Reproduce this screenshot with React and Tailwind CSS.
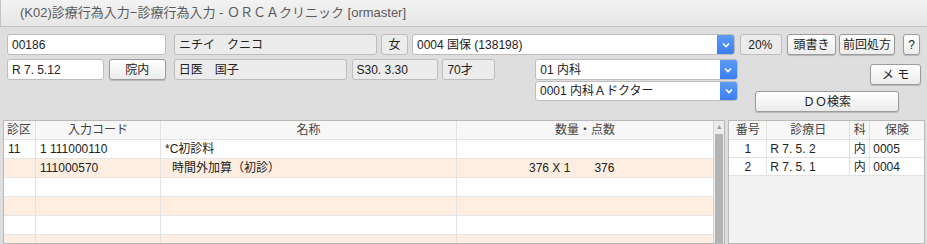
import React from 'react';

const font = { fontFamily: '"Liberation Sans", "Noto Sans CJK JP", sans-serif' };

const Box = ({ className, children }) => (
  <div className={`h-full flex items-center px-[4px] border border-[#bdbdbd] rounded-[3px] text-[12px] text-[#222] whitespace-nowrap overflow-hidden ${className}`}>
    {children}
  </div>
);

const Btn = ({ className, children }) => (
  <div className={`h-full flex items-center justify-center border border-[#9c9c9c] rounded-[3px] bg-gradient-to-b from-white to-[#ececec] shadow-[0_1px_1px_rgba(0,0,0,0.18)] text-[12px] text-[#222] whitespace-nowrap ${className}`}>
    {children}
  </div>
);

const Chevron = () => (
  <svg width="8" height="6" viewBox="0 0 8 6">
    <path d="M1 1.5 L4 4.5 L7 1.5" fill="none" stroke="white" strokeWidth="1.6" />
  </svg>
);

const Select = ({ className, children }) => (
  <div className={`h-full flex border border-[#bdbdbd] rounded-[3px] bg-white overflow-hidden ${className}`}>
    <div className="flex-1 flex items-center px-[4px] text-[12px] text-[#222] whitespace-nowrap">{children}</div>
    <div className="w-[17px] flex items-center justify-center bg-gradient-to-b from-[#5b9bf8] to-[#3a7ef0]">
      <Chevron />
    </div>
  </div>
);

const leftRows = [
  { bg: 'bg-white', a: '11', b: '1 111000110', c: '*C初診料', d: null },
  { bg: 'bg-[#fdeee1]', a: '', b: '111000570', c: '時間外加算（初診）', indent: true, d: ['376 X 1', '376'] },
  { bg: 'bg-white' },
  { bg: 'bg-[#fdeee1]' },
  { bg: 'bg-white' },
  { bg: 'bg-[#fdeee1]' },
];

const rightRows = [
  { no: '1', date: 'R 7. 5. 2', ka: '内', ins: '0005' },
  { no: '2', date: 'R 7. 5. 1', ka: '内', ins: '0004' },
];

export default function App() {
  return (
    <div className="w-[927px] h-[244px] overflow-hidden bg-[#dedede] flex flex-col" style={font}>
      {/* title bar */}
      <div className="h-[27px] shrink-0 flex items-center pl-[19px] border-b border-l border-[#c4c4c4] bg-gradient-to-b from-[#f3f3f3] to-[#e6e6e6] text-[13px] text-[#5a5a5a]">
        (K02)診療行為入力−診療行為入力 - ＯＲＣＡクリニック [ormaster]
      </div>

      {/* top form */}
      <div className="flex pt-[7px] pl-[7px] h-[93px] shrink-0">
        <div className="w-[731px] flex flex-col">
          <div className="flex h-[21px]">
            <Box className="w-[159px] bg-white">00186</Box>
            <Box className="w-[203px] ml-[8px] bg-[#ececec]">ニチイ　クニコ</Box>
            <Box className="w-[27px] ml-[4px] bg-[#ececec] justify-center">女</Box>
            <Select className="w-[323px] ml-[4px]">0004 国保 (138198)</Select>
          </div>
          <div className="flex h-[21px] mt-[4px]">
            <Box className="w-[97px] bg-white">R 7. 5.12</Box>
            <Btn className="w-[57px] ml-[5px]">院内</Btn>
            <Box className="w-[173px] ml-[8px] bg-[#ececec]">日医　国子</Box>
            <Box className="w-[87px] ml-[5px] bg-[#ececec]">S30. 3.30</Box>
            <Box className="w-[53px] ml-[4px] bg-[#ececec]">70才</Box>
            <Select className="w-[203px] ml-[40px]">01 内科</Select>
          </div>
          <div className="flex h-[20px] mt-[1px] pl-[528px]">
            <Select className="w-[203px]">0001 内科Ａドクター</Select>
          </div>
        </div>
        <div className="flex-1 flex flex-col">
          <div className="flex h-[21px] pl-[2px]">
            <Box className="w-[42px] bg-[#ececec]">&nbsp;20%</Box>
            <Btn className="w-[49px] ml-[5px]">頭書き</Btn>
            <Btn className="w-[56px] ml-[3px]">前回処方</Btn>
            <Btn className="w-[17px] ml-[8px]">?</Btn>
          </div>
          <div className="flex h-[21px] mt-[9px] pl-[132px]">
            <Btn className="w-[51px]">メ モ</Btn>
          </div>
          <div className="flex h-[21px] mt-[6px] pl-[17px]">
            <Btn className="w-[144px]">ＤＯ検索</Btn>
          </div>
        </div>
      </div>

      {/* tables */}
      <div className="flex flex-1 min-h-0 pl-[3px] pr-[2px]">
        <div className="w-[723px] flex border border-[#b9b9b9] bg-white overflow-hidden">
          <div className="flex-1 flex flex-col">
            <div className="grid grid-cols-[32px_125px_296px_1fr] h-[19px] shrink-0 bg-[#f7f7f7] border-b border-[#e2e2e2] text-[12px] text-[#444]">
              <div className="flex items-center pl-[3px] border-r border-[#e2e2e2]">診区</div>
              <div className="flex items-center justify-center border-r border-[#e2e2e2]">入力コード</div>
              <div className="flex items-center justify-center border-r border-[#e2e2e2]">名称</div>
              <div className="flex items-center justify-center">数量・点数</div>
            </div>
            {leftRows.map((r, i) => (
              <div key={i} className={`grid grid-cols-[32px_125px_296px_1fr] h-[19px] shrink-0 border-b border-[#e6e6e6] text-[12px] text-[#222] ${r.bg}`}>
                <div className="flex items-center pl-[4px] border-r border-[#e2e2e2]">{r.a}</div>
                <div className="flex items-center pl-[4px] border-r border-[#e2e2e2]">{r.b}</div>
                <div className={`flex items-center border-r border-[#e2e2e2] ${r.indent ? 'pl-[11px]' : 'pl-[4px]'}`}>{r.c}</div>
                <div className="flex items-center">
                  {r.d && (
                    <>
                      <span className="ml-[72px]">{r.d[0]}</span>
                      <span className="ml-[24px]">{r.d[1]}</span>
                    </>
                  )}
                </div>
              </div>
            ))}
          </div>
          {/* scrollbar */}
          <div className="w-[11px] flex flex-col bg-[#ececec] border-l border-[#d4d4d4]">
            <div className="h-[13px] flex items-center justify-center text-[7px] text-[#999]">▲</div>
            <div className="flex-1 mx-[1px] bg-[#b3b3b3]"></div>
          </div>
        </div>
        <div className="w-[197px] ml-[3px] flex flex-col border border-[#b9b9b9] bg-[#f2f2f2] overflow-hidden">
          <div className="grid grid-cols-[38px_83px_20px_1fr] h-[19px] shrink-0 bg-[#f7f7f7] border-b border-[#e2e2e2] text-[12px] text-[#444]">
            <div className="flex items-center justify-center border-r border-[#e2e2e2]">番号</div>
            <div className="flex items-center justify-center border-r border-[#e2e2e2]">診療日</div>
            <div className="flex items-center justify-center border-r border-[#e2e2e2]">科</div>
            <div className="flex items-center justify-center">保険</div>
          </div>
          {rightRows.map((r) => (
            <div key={r.no} className="grid grid-cols-[38px_83px_20px_1fr] h-[18px] shrink-0 bg-white border-b border-[#e2e2e2] text-[12px] text-[#222]">
              <div className="flex items-center justify-center border-r border-[#e2e2e2]">{r.no}</div>
              <div className="flex items-center pl-[3px] border-r border-[#e2e2e2]">{r.date}</div>
              <div className="flex items-center justify-center border-r border-[#e2e2e2]">{r.ka}</div>
              <div className="flex items-center pl-[3px]">{r.ins}</div>
            </div>
          ))}
        </div>
      </div>
    </div>
  );
}
